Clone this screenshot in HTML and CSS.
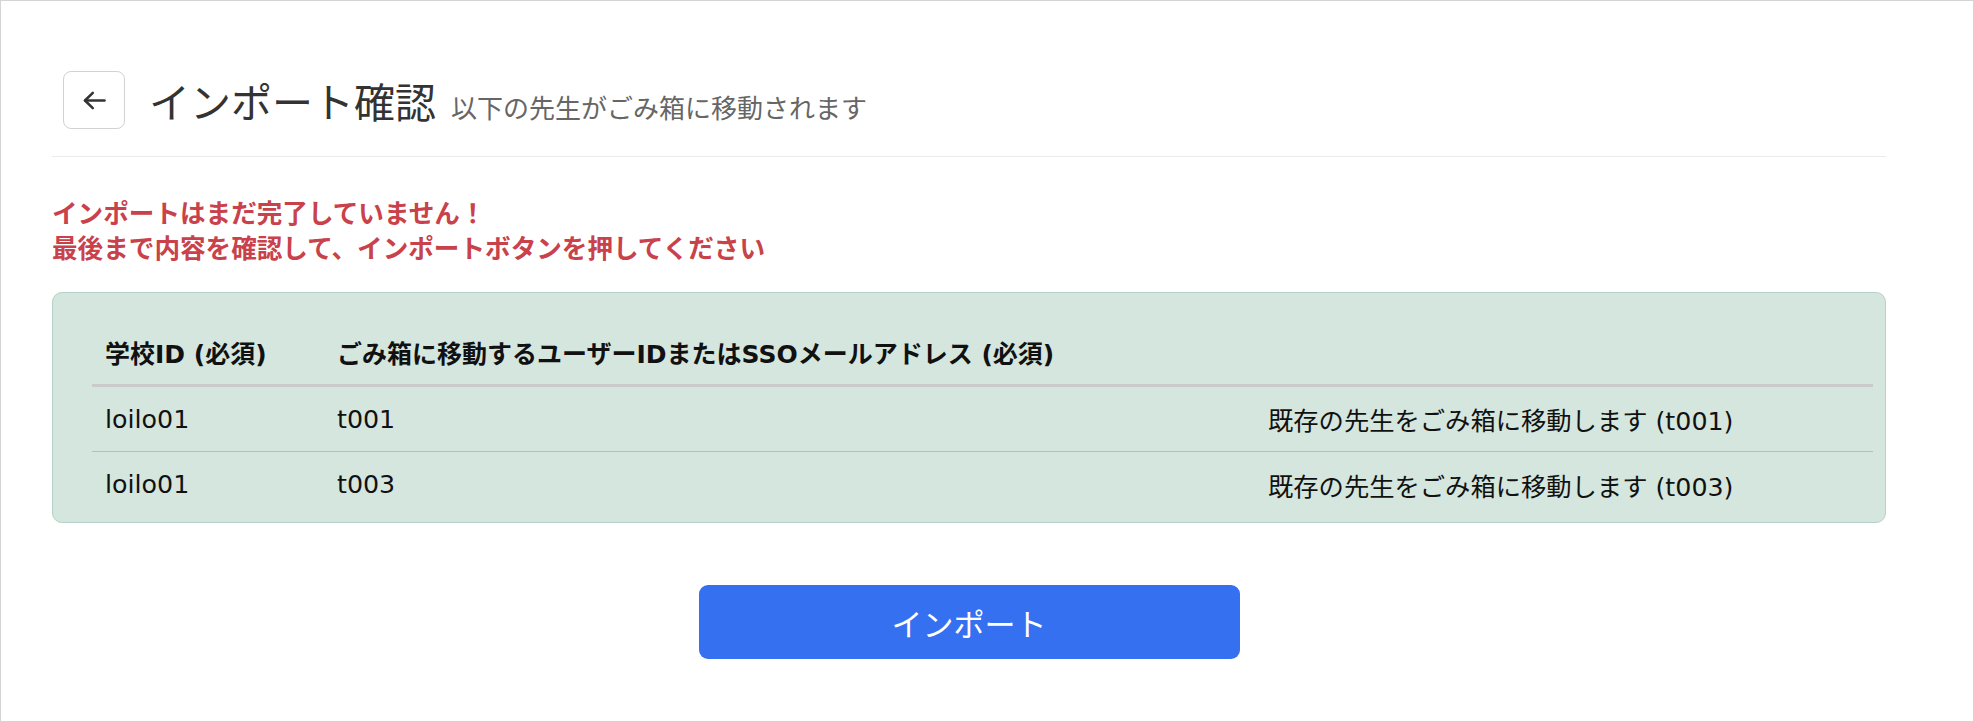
FILE: index.html
```html
<!DOCTYPE html>
<html lang="ja">
<head>
<meta charset="utf-8">
<title>インポート確認</title>
<link rel="stylesheet" href="styles.css">
</head>
<body>
<div class="page">
  <header class="header">
    <button class="back" type="button" aria-label="戻る">
      <svg width="23" height="19" viewBox="0 0 23 19" fill="none" stroke="#333" stroke-width="2.5" stroke-linecap="round" stroke-linejoin="round">
        <path d="M21.5 9.5H2"/>
        <path d="M9.8 1.8L2 9.5l7.8 7.7"/>
      </svg>
    </button>
    <div class="titles">
      <h1 class="title">インポート確認</h1>
      <span class="subtitle">以下の先生がごみ箱に移動されます</span>
    </div>
  </header>

  <p class="warning">インポートはまだ完了していません！<br>最後まで内容を確認して、インポートボタンを押してください</p>

  <div class="card">
    <table class="table">
      <colgroup>
        <col class="col-school">
        <col class="col-user">
        <col class="col-note">
      </colgroup>
      <thead>
        <tr>
          <th>学校ID (必須)</th>
          <th>ごみ箱に移動するユーザーIDまたはSSOメールアドレス (必須)</th>
          <th></th>
        </tr>
      </thead>
      <tbody>
        <tr>
          <td>loilo01</td>
          <td>t001</td>
          <td>既存の先生をごみ箱に移動します (t001)</td>
        </tr>
        <tr>
          <td>loilo01</td>
          <td>t003</td>
          <td>既存の先生をごみ箱に移動します (t003)</td>
        </tr>
      </tbody>
    </table>
  </div>

  <div class="actions">
    <button class="import" type="button">インポート</button>
  </div>
</div>
</body>
</html>
```

FILE: styles.css
```css
html, body {
  margin: 0;
  padding: 0;
  background: #ffffff;
}

body {
  font-family: "Noto Sans CJK JP", "Noto Sans", sans-serif;
  color: #333333;
}

.page {
  box-sizing: border-box;
  height: 722px;
  border: 1px solid #d4d4d4;
  padding: 70px 87px 0 51px;
}

.header {
  display: flex;
  align-items: center;
  gap: 24px;
  padding: 0 0 27px 11px;
  border-bottom: 1px solid #ebebeb;
}

.back {
  box-sizing: border-box;
  width: 62px;
  height: 58px;
  flex: none;
  display: flex;
  align-items: center;
  justify-content: center;
  padding: 0;
  background: #ffffff;
  border: 1px solid #d2d2d2;
  border-radius: 8px;
}

.titles {
  display: flex;
  align-items: baseline;
  gap: 15px;
}

.title {
  margin: 0;
  font-size: 41px;
  font-weight: 400;
  line-height: 1;
  color: #333333;
}

.subtitle {
  font-size: 26px;
  line-height: 1;
  color: #666666;
}

.warning {
  margin: 37px 0 0;
  font-size: 25.6px;
  line-height: 35px;
  font-weight: 700;
  color: #c9414a;
}

.card {
  margin-top: 28px;
  background: #d5e6de;
  border: 1px solid #b4d2c5;
  border-radius: 10px;
  padding: 26px 12px 5px 39px;
}

.table {
  width: 100%;
  border-collapse: collapse;
  table-layout: fixed;
  font-family: "DejaVu Sans", "Noto Sans CJK JP", sans-serif;
  color: #111111;
}

.col-school { width: 232px; }
.col-user { width: 931px; }

.table th {
  height: 65px;
  padding: 0 13px;
  text-align: left;
  font-size: 25px;
  font-weight: 700;
  white-space: nowrap;
  border-bottom: 3px solid #c9cbca;
}

.table td {
  height: 64px;
  padding: 0 13px;
  font-size: 25.3px;
  white-space: nowrap;
  border-bottom: 1px solid #a9c4b8;
}

.table tbody tr:last-child td {
  height: 65px;
  border-bottom: none;
}

.actions {
  display: flex;
  justify-content: center;
  margin-top: 62px;
}

.import {
  width: 541px;
  height: 74px;
  border: none;
  border-radius: 9px;
  background: #3570f0;
  color: #ffffff;
  font-family: "Noto Sans CJK JP", sans-serif;
  font-size: 31px;
  font-weight: 400;
}
```
